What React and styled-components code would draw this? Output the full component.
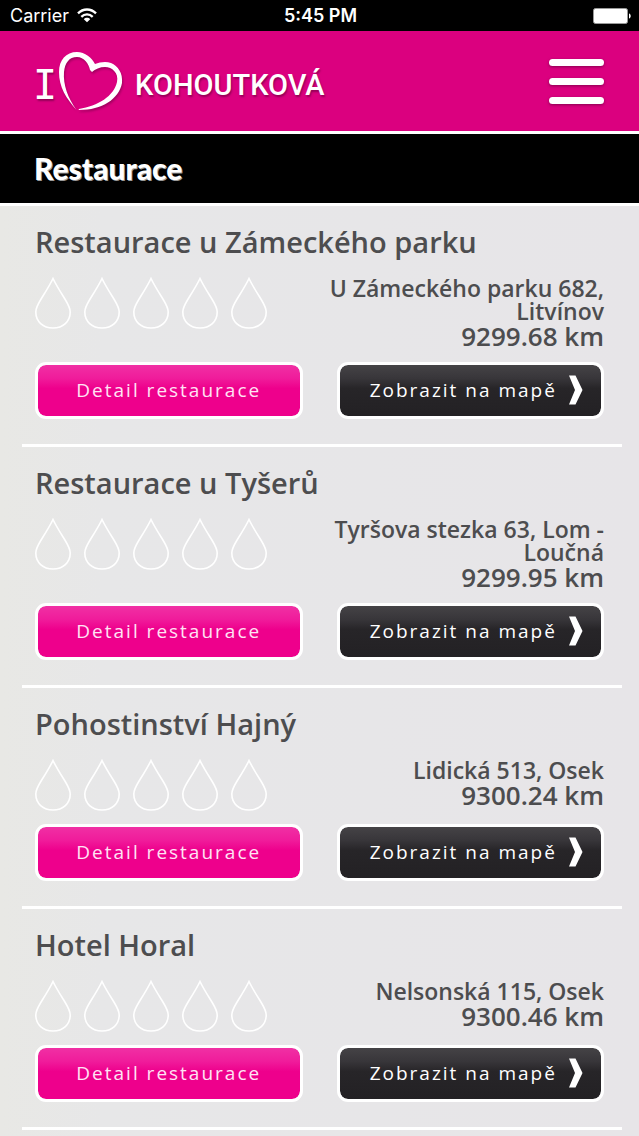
import React from "react";
import styled, { createGlobalStyle } from "styled-components";

const GlobalStyle = createGlobalStyle`
  *, *::before, *::after { box-sizing: border-box; }
  body {
    margin: 0;
    background: linear-gradient(90deg, #e8e8e5 0, #e7e7e8 16%, #e7e5e8 100%);
    color: #4d4d4f;
    font-family: "Open Sans", "Noto Sans", sans-serif;
  }
`;

const StatusBar = styled.div`
  display: grid;
  grid-template-columns: 1fr auto 1fr;
  align-items: center;
  height: 31px;
  padding: 0 8px 0 10px;
  background: #000;
  color: #fff;
  font: 400 18px/31px Inter, sans-serif;
`;

const Carrier = styled.span`
  display: flex;
  align-items: center;
  gap: 8px;
`;

const Clock = styled.time`
  font-weight: 600;
`;

const BatteryIcon = styled.svg`
  justify-self: end;
`;

const Header = styled.header`
  display: flex;
  align-items: center;
  justify-content: space-between;
  height: 103px;
  padding: 0 35px 0 33px;
  border-bottom: 3px solid #fff;
  background: #db007f;
`;

const Logo = styled.a`
  display: flex;
  align-items: center;
  color: #fff;
  text-decoration: none;
  text-shadow: 1px 2px 2px rgba(80, 0, 50, 0.5);
`;

const LogoInitial = styled.span`
  padding-top: 8px;
  font: 400 40px/48px "DejaVu Sans Mono", monospace;
`;

const LogoHeart = styled.svg`
  filter: drop-shadow(1px 2px 1px rgba(80, 0, 50, 0.4));
`;

const LogoName = styled.span`
  margin-left: 12px;
  padding-top: 8px;
  font: 500 29px/48px Roboto, sans-serif;
`;

const MenuButton = styled.button`
  display: flex;
  flex-direction: column;
  gap: 12px;
  padding: 0;
  border: 0;
  background: none;
  cursor: pointer;
`;

const MenuLine = styled.span`
  width: 55px;
  height: 7px;
  border-radius: 4px;
  background: #fff;
  box-shadow: 0 1px 3px rgba(80, 0, 50, 0.6);
`;

const TitleBar = styled.div`
  height: 72px;
  padding: 0 34px;
  border-bottom: 3px solid #fff;
  background: #000;
`;

const PageTitle = styled.h1`
  margin: 0;
  color: #fff;
  font: 900 30px/68px Lato, sans-serif;
  text-shadow: 1px 1px 0 #999;
`;

const List = styled.main`
  padding: 0 17px 0 22px;
`;

const Item = styled.article`
  padding: 16px 18px 25px 13px;
  border-bottom: 3px solid #fff;
`;

const ItemName = styled.h2`
  margin: 0 0 15px;
  font-size: 29px;
  line-height: 40px;
  font-weight: 600;
`;

const Details = styled.div`
  display: flex;
  align-items: flex-start;
  justify-content: space-between;
  gap: 40px;
  min-height: 56px;
  margin-bottom: 9px;
`;

const Rating = styled.div`
  display: flex;
  flex: none;
  gap: 13px;
`;

const Place = styled.div`
  padding-bottom: 4px;
  text-align: right;
  font-weight: 600;
`;

const Address = styled.div`
  font-size: 23px;
  line-height: 23px;
`;

const Distance = styled.div`
  font-size: 26px;
  line-height: 26px;
`;

const Actions = styled.div`
  display: grid;
  grid-template-columns: 1fr 1fr;
  gap: 34px;
`;

const ActionButton = styled.button`
  display: flex;
  align-items: center;
  justify-content: center;
  gap: 12px;
  height: 57px;
  padding: 0 0 2px;
  border: 3px solid #fff;
  border-radius: 11px;
  background: ${({ $dark }) =>
    $dark
      ? "linear-gradient(#454346 0, #38363a 26%, #272528 46%, #232124 100%)"
      : "linear-gradient(#f030a4 0, #f01c9b 26%, #ee008c 46%, #ee008c 100%)"};
  background-clip: padding-box;
  color: ${({ $dark }) => ($dark ? "#fff" : "#ffe3f4")};
  font: 400 19px/28px "Open Sans", sans-serif;
  letter-spacing: 2px;
  cursor: pointer;
`;

const MapLabel = styled.span`
  padding-left: 12px;
`;

function Drop() {
  return (
    <svg width="36" height="53" viewBox="0 0 36 53" fill="none" stroke="#fff" strokeWidth="1.6" aria-hidden="true">
      <path d="M18 1.5C15 8 9.500 16.500 5.500 23C2.500 28 .8 31 .8 35C.8 44.500 8 51 18 51S35.200 44.500 35.200 35C35.200 31 33.500 28 30.500 23C26.500 16.500 21 8 18 1.500Z" />
    </svg>
  );
}

const places = [
  { name: "Restaurace u Zámeckého parku", address: "U Zámeckého parku 682, Litvínov", distance: "9299.68 km" },
  { name: "Restaurace u Tyšerů", address: "Tyršova stezka 63, Lom - Loučná", distance: "9299.95 km" },
  { name: "Pohostinství Hajný", address: "Lidická 513, Osek", distance: "9300.24 km" },
  { name: "Hotel Horal", address: "Nelsonská 115, Osek", distance: "9300.46 km" },
];

function Restaurant({ name, address, distance }) {
  return (
    <Item>
      <ItemName>{name}</ItemName>
      <Details>
        <Rating role="img" aria-label="0 / 5">
          {[1, 2, 3, 4, 5].map((n) => (
            <Drop key={n} />
          ))}
        </Rating>
        <Place>
          <Address>{address}</Address>
          <Distance>{distance}</Distance>
        </Place>
      </Details>
      <Actions>
        <ActionButton type="button">Detail restaurace</ActionButton>
        <ActionButton type="button" $dark>
          <MapLabel>Zobrazit na mapě</MapLabel>
          <svg width="14" height="30" viewBox="0 0 14 30" fill="#fff" aria-hidden="true">
            <path d="M0 0.500H6.500L13.500 15L6.500 29.500H0L6 15Z" />
          </svg>
        </ActionButton>
      </Actions>
    </Item>
  );
}

export default function App() {
  return (
    <>
      <GlobalStyle />
      <StatusBar>
        <Carrier>
          Carrier
          <svg width="20" height="15" viewBox="0 0 20 15" fill="none" stroke="#fff" strokeWidth="2.3" aria-hidden="true">
            <path d="M1 5.400C6 .2 14 .2 19 5.400" />
            <path d="M4.300 8.900C7.500 5.600 12.500 5.600 15.700 8.900" />
            <path d="M10 14.300L6.800 11.200C8.500 9.400 11.500 9.400 13.200 11.200Z" fill="#fff" stroke="none" />
          </svg>
        </Carrier>
        <Clock>5:45 PM</Clock>
        <BatteryIcon width="38" height="16" viewBox="0 0 38 16" aria-hidden="true">
          <rect x="0.500" y="0.500" width="34" height="15" rx="2" fill="#fff" stroke="#999" />
          <path d="M36 5.500C38.300 6 38.300 10 36 10.500Z" fill="#fff" />
        </BatteryIcon>
      </StatusBar>
      <Header>
        <Logo href="#">
          <LogoInitial>I</LogoInitial>
          <LogoHeart width="66" height="60" viewBox="0 0 66 60" fill="#fff" aria-hidden="true">
            <path d="M19.500 59C9 47 2 36 2 21C2 9 9 1 20 1C28 1 35 7 38 13C43 11 49 10 54 12C61 15 66 22 65 32C62 48 45 59 22 59C21.500 58.500 21.500 58.200 22 58C41 55 57 45 60 31C62 22 55 16 48 16C43 16 38 18 35 21L33 19C32 13 27 6 20 6C12 6 8 12 7 21C6 34 11 47 19.500 59Z" />
          </LogoHeart>
          <LogoName>KOHOUTKOVÁ</LogoName>
        </Logo>
        <MenuButton type="button" aria-label="Menu">
          <MenuLine />
          <MenuLine />
          <MenuLine />
        </MenuButton>
      </Header>
      <TitleBar>
        <PageTitle>Restaurace</PageTitle>
      </TitleBar>
      <List>
        {places.map((place) => (
          <Restaurant key={place.name} {...place} />
        ))}
      </List>
    </>
  );
}
